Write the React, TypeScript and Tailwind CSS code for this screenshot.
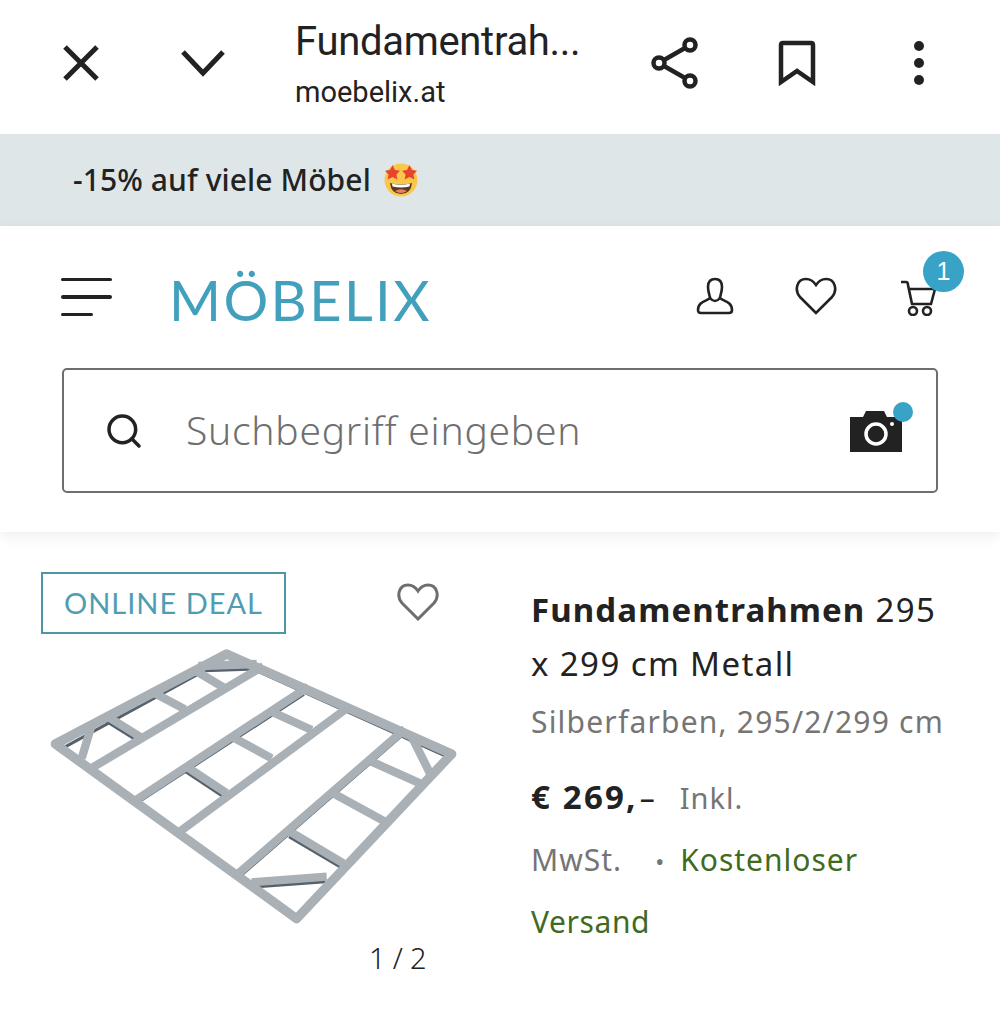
import { Search } from 'lucide-react';

const INK = '#222222';

const longBeams = [
  'M175 420 L700 108',
  'M315 512 L835 170',
  'M445 608 L960 228',
  'M620 735 L1125 297',
];

const crossBeams = [
  'M230 258 L330 320',
  'M365 185 L465 238',
  'M490 118 L580 172',
  'M470 410 L590 490',
  'M605 320 L725 385',
  'M725 245 L845 300',
  'M780 605 L940 700',
  'M910 490 L1065 575',
  'M1025 395 L1170 460',
];

const braces = [
  'M505 108 L680 102',
  'M185 285 L155 385',
  'M1145 320 L1200 430',
  'M665 757 L890 740',
];

function FrameDrawing() {
  return (
    <svg viewBox="0 0 1350 930" className="block h-[310px] w-[450px]" fill="none">
      <g stroke="#56616b" strokeWidth="9" transform="translate(-3 15)">
        <path d="M600 70 L1255 366" />
        <path d="M100 340 L580 78" />
        <path d="M330 500 L825 178" />
        <path d="M640 718 L1115 305" />
        <path d="M230 258 L330 320" />
        <path d="M470 410 L590 490" />
        <path d="M780 605 L940 700" />
        <path d="M665 757 L890 740" />
        <path d="M505 108 L680 102" />
      </g>
      <g stroke="#a9b0b6" strokeWidth="25">
        {longBeams.map((d) => (
          <path key={d} d={d} />
        ))}
        {crossBeams.map((d) => (
          <path key={d} d={d} />
        ))}
        {braces.map((d) => (
          <path key={d} d={d} />
        ))}
        <path d="M590 72 L1265 372 L800 866 L76 342Z" strokeWidth="28" strokeLinejoin="round" />
      </g>
    </svg>
  );
}

function StarEmoji() {
  return (
    <svg viewBox="0 0 36 36" className="ml-[12px] h-[36px] w-[36px]">
      <circle cx="18" cy="18" r="16.5" fill="#f9c74a" />
      <path d="M7 21 Q18 24 29 21 Q28 32 18 32 Q8 32 7 21Z" fill="#5b3a1e" />
      <path d="M9 21.5 Q18 24 27 21.5 L26.5 24.5 Q18 26.5 9.5 24.5Z" fill="#ffffff" />
      <path d="M12 29 Q18 25.5 24 29 Q18 33 12 29Z" fill="#e8806a" />
      <path d="M9.5 3 L12 8 L17 8.8 L13.4 12.4 L14.4 17.4 L9.5 15 L4.6 17.4 L5.6 12.4 L2 8.8 L7 8Z" fill="#e8432e" />
      <path d="M26.5 3 L29 8 L34 8.8 L30.4 12.4 L31.4 17.4 L26.5 15 L21.6 17.4 L22.6 12.4 L19 8.8 L24 8Z" fill="#e8432e" />
    </svg>
  );
}

export default function App() {
  return (
    <div className="h-[1030px] w-[1000px] overflow-hidden bg-white font-['Noto_Sans',sans-serif]">
      {/* browser bar */}
      <div className="flex h-[134px] items-center px-5 pb-[8px]">
        <div className="flex w-[122px] justify-center">
          <svg width="38" height="38" viewBox="0 0 38 38" fill="none" stroke={INK} strokeWidth="5">
            <path d="M3 3 L35 35 M35 3 L3 35" />
          </svg>
        </div>
        <div className="flex w-[122px] justify-center">
          <svg width="46" height="28" viewBox="0 0 46 28" fill="none" stroke={INK} strokeWidth="5">
            <path d="M3 3 L23 24 L43 3" />
          </svg>
        </div>
        <div className="flex-1 pl-[31px] font-['Roboto',sans-serif] text-[#222222]">
          <div className="text-[40px] leading-[50px] tracking-[-0.3px]">Fundamentrah...</div>
          <div className="mt-[7px] text-[29px] leading-[36px]">moebelix.at</div>
        </div>
        <div className="flex w-[122px] justify-center">
          <svg width="48" height="52" viewBox="0 0 48 52" fill="none" stroke={INK} strokeWidth="4.5">
            <circle cx="8" cy="26" r="5.5" />
            <circle cx="39" cy="8" r="5.5" />
            <circle cx="39" cy="44" r="5.5" />
            <path d="M13 23 L34 11 M13 29 L34 41" />
          </svg>
        </div>
        <div className="flex w-[122px] justify-center">
          <svg width="38" height="46" viewBox="0 0 38 46" fill="none" stroke={INK} strokeWidth="4.5">
            <path d="M3 5 Q3 3 5 3 H33 Q35 3 35 5 V42 L19 31 L3 42Z" />
          </svg>
        </div>
        <div className="flex w-[122px] flex-col items-center gap-[7px]">
          <span className="h-[10px] w-[10px] rounded-full bg-[#222222]" />
          <span className="h-[10px] w-[10px] rounded-full bg-[#222222]" />
          <span className="h-[10px] w-[10px] rounded-full bg-[#222222]" />
        </div>
      </div>

      {/* promo */}
      <div className="flex h-[92px] items-center bg-[#dfe6e8] pl-[73px] text-[30px] font-medium text-[#222222]">
        <span className="mt-[-2px] tracking-[0.1px]">-15% auf viele Möbel</span>
        <StarEmoji />
      </div>

      {/* site header */}
      <div className="relative h-[306px] bg-white px-[62px] shadow-[0_4px_14px_rgba(0,0,0,0.07)]">
        <div className="flex h-[142px] items-center">
          <div className="ml-[-1px] flex w-[111px] flex-col gap-[14px]">
            <span className="h-[3.5px] w-[51px] rounded-full bg-[#222222]" />
            <span className="h-[3.5px] w-[51px] rounded-full bg-[#222222]" />
            <span className="h-[3.5px] w-[32px] rounded-full bg-[#222222]" />
          </div>
          <div className="mt-[6px] ml-[-3px] font-['Lato',sans-serif] text-[56px] leading-none tracking-[2.4px] text-[#42a0bd]">MÖBELIX</div>
          <div className="ml-auto flex items-center">
            <svg className="mt-[-2px]" width="38" height="38" viewBox="0 0 38 38" fill="none" stroke={INK} strokeWidth="2.6">
              <path d="M12 10 C12 4 15 2 19 2 C23 2 26 4 26 10 C26 15 24 19 24 21 C26 24 36 24 36 33 Q36 36 33 36 H5 Q2 36 2 33 C2 24 12 24 14 21 C14 19 12 15 12 10Z" />
              <path d="M14 21 Q19 27 24 21" />
            </svg>
            <svg className="ml-[61px] mt-[-2px]" width="42" height="38" viewBox="0 0 42 38" fill="none" stroke={INK} strokeWidth="2.6">
              <path d="M21 36 L5 20 C-1 13 2 2 11 2 C16 2 19 5 21 8 C23 5 26 2 31 2 C40 2 43 13 37 20Z" />
            </svg>
            <div className="relative ml-[63px] mr-[2px] mb-[6px] pt-[8px]">
              <svg width="36" height="36" viewBox="0 0 36 36" fill="none" stroke={INK} strokeWidth="2.6">
                <path d="M1 2 H6 Q8 2 8 5 L12 24 H31 L35 9 H9" />
                <circle cx="13" cy="31" r="4" />
                <circle cx="27" cy="31" r="4" />
              </svg>
              <span className="absolute left-[23px] top-[-21px] flex h-[41px] w-[41px] items-center justify-center rounded-full bg-[#38a3c6] font-['Liberation_Sans',sans-serif] text-[25px] font-normal text-white">
                1
              </span>
            </div>
          </div>
        </div>
        <div className="flex h-[125px] items-center rounded-[5px] border-2 border-[#6e6e6e] pl-[40px] pr-[34px]">
          <Search size={40} strokeWidth={2.1} color={INK} />
          <span className="ml-[42px] text-[39px] font-light tracking-[0.75px] text-[#6f6f6f]">Suchbegriff eingeben</span>
          <div className="relative ml-auto">
            <svg className="block" width="52" height="42" viewBox="0 0 52 42">
              <path d="M0 7 H13 L16 1 H34 L37 7 H52 V42 H0Z" fill={INK} />
              <circle cx="26" cy="24" r="10" fill="none" stroke="#ffffff" strokeWidth="3.5" />
              <circle cx="42" cy="14" r="2" fill="#ffffff" />
            </svg>
            <span className="absolute right-[-11px] top-[-8px] h-[20px] w-[20px] rounded-full bg-[#38a3c6]" />
          </div>
        </div>
      </div>

      {/* product */}
      <div className="flex pt-[40px]">
        <div className="w-[531px] pl-[41px]">
          <div className="flex w-[398px] items-center justify-between">
            <div className="flex h-[62px] w-[245px] items-center justify-center border-2 border-[#4f95a8] font-['Lato',sans-serif] text-[29px] tracking-[1px] text-[#4f9db3]">
              ONLINE DEAL
            </div>
            <svg className="mb-[2px]" width="42" height="38" viewBox="0 0 42 38" fill="none" stroke="#6e6e6e" strokeWidth="3">
              <path d="M21 36 L5 20 C-1 13 2 2 11 2 C16 2 19 5 21 8 C23 5 26 2 31 2 C40 2 43 13 37 20Z" />
            </svg>
          </div>
          <div className="ml-[-11px] mt-[-4px]">
            <FrameDrawing />
          </div>
          <div className="ml-[328px] text-[29px] font-light leading-[36px] tracking-[-0.2px] text-[#222222]">1 / 2</div>
        </div>
        <div className="pt-[11px] text-[#222222]">
          <div className="text-[33px] leading-[54px] tracking-[1.4px]">
            <span className="font-bold tracking-[1.1px]">Fundamentrahmen</span> 295
          </div>
          <div className="text-[33px] leading-[54px] tracking-[1.4px]">x 299 cm Metall</div>
          <div className="mt-[6px] text-[30px] leading-[50px] tracking-[1.2px] text-[#757575]">Silberfarben, 295/2/299 cm</div>
          <div className="mt-[20px] flex items-baseline leading-[60px]">
            <span className="text-[33px] font-bold tracking-[2.2px]">€ 269,</span>
            <span className="ml-[2px] text-[30px]">–</span>
            <span className="ml-[25px] text-[29px] tracking-[1px] text-[#757575]">Inkl.</span>
          </div>
          <div className="mt-[2px] flex items-baseline text-[30px] leading-[60px] tracking-[1px]">
            <span className="text-[#757575]">MwSt.</span>
            <span className="ml-[33px] text-[24px] text-[#757575]">•</span>
            <span className="ml-[15px] text-[#3f6b1f]">Kostenloser</span>
          </div>
          <div className="text-[30px] leading-[60px] tracking-[0.6px] text-[#3f6b1f]">Versand</div>
        </div>
      </div>
    </div>
  );
}
